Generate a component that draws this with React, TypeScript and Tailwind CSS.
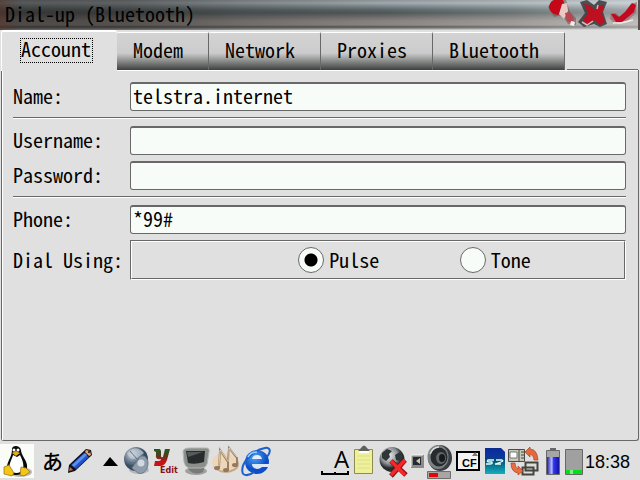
import { useState } from "react";
import type { ReactNode } from "react";

const MONO = "font-['Noto_Sans_Mono_CJK_JP','Liberation_Mono',monospace]";

const TABS = ["Account", "Modem", "Network", "Proxies", "Bluetooth"];

function TitleBar() {
  return (
    <header className="relative flex h-[30px] shrink-0 items-center justify-between pl-[5px]">
      <div className="absolute inset-0 bg-[linear-gradient(to_bottom,#8d969b_0px,#a6afb4_3px,#808b90_6px,#566163_10px,#4b5353_13px,#6d6d6b_17px,#8b8481_21px,#8e8884_25px,#4c4e4d_27px,#a3a5a5_29px,#d5d5d5_30px)]" />
      <div className="absolute inset-0 bg-[linear-gradient(to_right,rgba(70,44,36,0.8)_0%,rgba(38,36,34,0.62)_3%,rgba(40,38,36,0.55)_20%,rgba(60,60,60,0.35)_38%,rgba(110,110,110,0.1)_60%,rgba(230,235,235,0.2)_80%,rgba(255,255,255,0.45)_100%)]" />
      <h1 className="relative pb-[2px] text-[20px] leading-[28px] text-black">Dial-up (Bluetooth)</h1>
      <div className="relative flex">
        <button type="button" aria-label="Help" className="h-[30px] w-[32px]">
          <svg viewBox="546 0 32 30" className="h-[30px] w-[32px] blur-[0.6px]">
            <path d="M548 7L553 0H566L570 12L576 18V25L568 24L562 15L554 17Z" fill="#6e4a4c" opacity=".5" />
            <path d="M549 8Q549 2 554 0H563L566 8L558 15Q551 14 549 8Z" fill="#c40818" />
            <path d="M562 4L567 3L568 11L564 19L559 14Z" fill="#eac9c4" />
            <path d="M565 13L570 12L574 19L571 23L567 21Z" fill="#ba4450" />
            <path d="M571 21L575 22L574 26L570 25Z" fill="#f6eeee" />
          </svg>
        </button>
        <button type="button" aria-label="Cancel" className="h-[30px] w-[32px]">
          <svg viewBox="578 0 32 30" className="h-[30px] w-[32px] blur-[0.6px]">
            <path d="M580 2L587 0L594 5L599 0L607 2L603 12L607 24L600 27L594 24L584 27L578 22L585 13Z" fill="#363b3d" opacity=".85" />
            <path d="M584 4L589 5L595 10L599 5L604 5L602 14L605 22L600 25L594 20L588 24L583 20L588 13Z" fill="#bd1020" />
            <path d="M582 22L587 25L593 21M598 5L597 9" stroke="#dfb4b9" strokeWidth="1.500" fill="none" />
          </svg>
        </button>
        <button type="button" aria-label="OK" className="h-[30px] w-[30px]">
          <svg viewBox="610 0 30 30" className="h-[30px] w-[30px] blur-[0.6px]">
            <path d="M611 13L616 13L621 17L631 4L637 2L636 13L627 21L615 24L610 19Z" fill="#94686c" opacity=".7" />
            <path d="M611 14L615 14L619 17L625 12L632 3L636 5L634 12L622 22L616 22Z" fill="#c40820" />
            <path d="M613 23L621 23L633 20" stroke="#f3eaea" strokeWidth="1.500" fill="none" />
            <path d="M638 0H640V30H638Z" fill="#554d4b" />
          </svg>
        </button>
      </div>
    </header>
  );
}

function Tabs({ active, onSelect }: { active: string; onSelect: (tab: string) => void }) {
  return (
    <div role="tablist" className="flex h-[40px] shrink-0 items-end pl-px">
      {TABS.map((tab) =>
        tab === active ? (
          <button
            key={tab}
            type="button"
            role="tab"
            aria-selected
            onClick={() => onSelect(tab)}
            className="relative z-10 -mb-px h-[41px] rounded-t-[3px] border-t-2 border-l border-white bg-[#e0e0e0] pr-[24px] pb-[2px] pl-[18px]"
          >
            <span className="block h-[25px] w-fit border border-dotted border-black pr-px text-[20px] leading-[20px]">
              {tab}
            </span>
          </button>
        ) : (
          <button
            key={tab}
            type="button"
            role="tab"
            aria-selected={false}
            onClick={() => onSelect(tab)}
            className="h-[38px] rounded-t-[2px] border-t border-r border-t-white border-r-[#686868] bg-[linear-gradient(to_bottom,#d3d3d3_0px,#cccccc_20px,#a3a5a3_25px,#3e403f_37px)] pr-[25px] pb-[4px] pl-[16px] text-[20px] leading-[32px]"
          >
            {tab}
          </button>
        ),
      )}
      <span className="mr-[2px] ml-[2px] h-px flex-1 bg-[#686868]" />
    </div>
  );
}

function Field({ id, label, value = "", type = "text" }: { id: string; label: string; value?: string; type?: string }) {
  return (
    <div className="flex items-center">
      <label htmlFor={id} className="w-[117px] shrink-0 pb-[2px] leading-[27px]">
        {label}
      </label>
      <input
        id={id}
        type={type}
        defaultValue={value}
        autoComplete="off"
        className="h-[29px] min-w-0 flex-1 rounded-[3px] border border-t-2 border-[#686868] bg-[#f8fcf8] px-[2px] pb-[4px] leading-[22px] outline-none"
      />
    </div>
  );
}

function Rule() {
  return (
    <div className="pt-[6px] pb-[7px]">
      <hr className="h-[2px] border-0 border-t border-b border-t-[#686868] border-b-white" />
    </div>
  );
}

function Radio({ label, checked = false }: { label: string; checked?: boolean }) {
  return (
    <label className="flex items-center gap-[5px]">
      <input
        type="radio"
        name="dial"
        defaultChecked={checked}
        className="size-[26px] appearance-none rounded-full border border-[#686868] bg-[#f8fcf8] checked:bg-[radial-gradient(circle,#000_6px,#f8fcf8_7px)]"
      />
      {label}
    </label>
  );
}

function Icon({ x, label, className, children }: { x: number; label: string; className: string; children: ReactNode }) {
  return (
    <button type="button" aria-label={label} className={`h-[38px] shrink-0 overflow-hidden ${className}`}>
      <svg viewBox={`${x} 442 40 38`} className="h-[38px] w-[40px] max-w-none">
        {children}
      </svg>
    </button>
  );
}

function Taskbar() {
  return (
    <footer className="flex h-[38px] shrink-0 justify-between bg-[#e0e0e0]">
      <svg width="0" height="0" className="absolute">
        <defs>
          <radialGradient id="orb" cx=".35" cy=".3">
            <stop offset="0" stopColor="#e7eef3" />
            <stop offset=".5" stopColor="#8593a2" />
            <stop offset="1" stopColor="#394c61" />
          </radialGradient>
          <radialGradient id="world" cx=".4" cy=".35">
            <stop offset="0" stopColor="#e6eaeb" />
            <stop offset=".65" stopColor="#8f9598" />
            <stop offset="1" stopColor="#25292b" />
          </radialGradient>
          <radialGradient id="blue" cx=".4" cy=".3">
            <stop offset="0" stopColor="#4fa6f7" />
            <stop offset="1" stopColor="#0f4fc6" />
          </radialGradient>
          <linearGradient id="ygrad" x2="0" y2="1">
            <stop offset="0" stopColor="#176024" />
            <stop offset=".45" stopColor="#663219" />
            <stop offset=".75" stopColor="#c8121b" />
          </linearGradient>
          <linearGradient id="sdgrad" x2="0" y2="1">
            <stop offset="0" stopColor="#0c2a96" />
            <stop offset=".38" stopColor="#0b37a0" />
            <stop offset=".42" stopColor="#064468" />
            <stop offset="1" stopColor="#10b2c0" />
          </linearGradient>
          <linearGradient id="cell">
            <stop offset="0" stopColor="#2020a6" />
            <stop offset=".4" stopColor="#b8bcff" />
            <stop offset=".55" stopColor="#3038ed" />
            <stop offset="1" stopColor="#1414a0" />
          </linearGradient>
        </defs>
      </svg>
      <div className="flex">
        <Icon x={0} label="Launcher" className="w-[40px]">
          <path d="M0 444H34V478H0Z" fill="#fafcf8" />
          <ellipse cx="20" cy="472" rx="12" ry="5" fill="#b9b9b7" />
          <path d="M12 449C12 445 20 445 21 450C21 455 26 459 27 465C28 471 23 475 16 475C9 475 6 471 7 466C8 460 12 457 12 449Z" fill="#080808" />
          <path d="M13 455L17 457L20 455C23 461 24 465 23 469C21 474 13 474 10 470C8 464 12 460 13 455Z" fill="#fff" />
          <circle cx="14" cy="450" r="1.500" fill="#fff" />
          <circle cx="18" cy="450" r="1.500" fill="#fff" />
          <path d="M12 453L16 451L20 453L16 456Z" fill="#e4ad18" />
          <path d="M4 467L9 465L14 473L12 476L4 474ZM21 467L26 468L30 472L24 476L20 475Z" fill="#f2c516" stroke="#946d0a" strokeWidth=".7" />
        </Icon>
        <button
          type="button"
          aria-label="Input method"
          className="w-[25px] pb-[2px] font-['Noto_Sans_CJK_JP',sans-serif] text-[21px] leading-[36px] font-medium"
        >
          あ
        </button>
        <Icon x={65} label="Pen" className="w-[33px]">
          <path d="M68 473L69 465L86 449L91 450L92 455L75 471Z" fill="#101018" />
          <path d="M71 465L84 453L89 457L76 469Z" fill="#2450c8" />
          <path d="M72 465L85 453L87 455L74 467Z" fill="#5b90ea" />
          <path d="M86 450L90 451L91 455L89 456L85 452Z" fill="#e3a36f" />
          <path d="M69 471L70 467L73 470Z" fill="#bd7045" />
          <circle cx="89" cy="452" r="1" fill="#111" />
        </Icon>
        <Icon x={98} label="Show more" className="w-[24px]">
          <path d="M103 466L110 457L118 466Z" fill="#000" />
        </Icon>
        <Icon x={122} label="Media" className="w-[29px]">
          <ellipse cx="139" cy="470" rx="10" ry="4" fill="#b4b6b8" />
          <circle cx="136" cy="459" r="12" fill="url(#orb)" />
          <path d="M127 453Q136 444 144 453L137 458Q130 461 127 453Z" fill="#c1ccd5" opacity=".7" />
          <path d="M130 451L137 459M127 462L136 464" stroke="#5b7085" strokeWidth="1" />
          <path d="M138 460C140 453 148 456 148 463C148 471 142 475 138 473L132 468Z" fill="#8f9cac" stroke="#6e7f90" />
          <circle cx="141" cy="463" r="3.500" fill="#d1d9df" />
        </Icon>
        <Icon x={151} label="Editor" className="w-[30px]">
          <path
            d="M154 449H160L161 451V456Q161 458 163 457L165 449H170L167 460Q165 466 160 466H154L155 461H159Q161 461 161 459Q155 460 156 455V452L154 451Z"
            fill="url(#ygrad)"
          />
          <text x="160" y="473" fontSize="8" fontWeight="900" fontFamily="DejaVu Sans, sans-serif" fill="#861218">
            Edit
          </text>
        </Icon>
        <Icon x={181} label="Terminal" className="w-[30px]">
          <ellipse cx="196" cy="471" rx="11" ry="4" fill="#a0a09e" />
          <path d="M187 465H205L203 472Q195 476 189 470Z" fill="#777a77" />
          <path d="M183 451Q184 448 190 448H206Q210 448 209 452L207 464Q206 468 201 468H189Q185 467 184 462Z" fill="#8b8f8c" stroke="#b2b5b0" />
          <path d="M186 451H205L204 462Q195 465 188 463Z" fill="#282c2c" />
          <path d="M187 452H203L188 457Z" fill="#555b5a" />
        </Icon>
        <Icon x={211} label="Music" className="w-[30px]">
          <ellipse cx="226" cy="464" rx="13" ry="9" fill="#c6a986" />
          <ellipse cx="225" cy="462" rx="13" ry="9" fill="#eed6b8" />
          <path d="M219 468L220 450L228 462V470M228 462L229 448L237 458V464" stroke="#9a8064" strokeWidth="2" fill="none" />
          <path d="M219 466L220 450L228 461M229 462V448L237 457" stroke="#f8e8cf" strokeWidth=".7" fill="none" />
          <ellipse cx="217" cy="468" rx="3" ry="2" fill="#94785e" />
          <ellipse cx="226" cy="470" rx="3" ry="2" fill="#94785e" />
          <ellipse cx="235" cy="465" rx="3" ry="2" fill="#94785e" />
        </Icon>
        <Icon x={241} label="Internet" className="w-[31px]">
          <circle cx="257" cy="462" r="12" fill="url(#blue)" />
          <path d="M252 459Q253 455 257 455Q261 455 262 459Z" fill="#e4eefb" />
          <path d="M252 464H270V467H262Q260 469 257 469Q252 468 252 464Z" fill="#dce8f6" />
          <path d="M243 474C239 464 253 450 265 448C271 447 271 452 267 457M243 474Q248 477 254 472" fill="none" stroke="#1b61cd" strokeWidth="2" />
          <path d="M248 457Q251 452 257 452" stroke="#9bd0ff" strokeWidth="1.500" fill="none" />
        </Icon>
      </div>
      <div className="flex">
        <Icon x={318} label="Input mode" className="w-[34px]">
          <text x="334" y="468" fontSize="24" fontFamily="Open Sans, sans-serif">
            A
          </text>
          <path d="M322 471V474H348V471M335 472V474" fill="none" stroke="#000" strokeWidth="2" />
        </Icon>
        <Icon x={352} label="Clipboard" className="w-[24px]">
          <path d="M354.500 449.500H372.500V473.500H354.500Z" fill="#eef09a" stroke="#8c8c4f" />
          <path d="M357 456H370M357 460H370M357 464H370M357 468H370" stroke="#dce088" />
          <path d="M358 451L361 448Q364 443 367 448L370 451Z" fill="#5e6159" />
          <path d="M359 452H369" stroke="#fff" strokeWidth="2" />
        </Icon>
        <Icon x={376} label="Network status" className="w-[33px]">
          <circle cx="392" cy="459.500" r="12.500" fill="url(#world)" />
          <path d="M382 453L387 449L392 451L389 454L390 457L386 461L382 458ZM395 455L400 452L403 457L400 461L396 460Z" fill="#303638" />
          <path d="M391 461L406 475M405 460L391 476" stroke="#8b1014" strokeWidth="5" />
          <path d="M391 461L405 475M405 460L391 475" stroke="#f3282b" strokeWidth="3.500" />
        </Icon>
        <Icon x={409} label="Display" className="w-[16px]">
          <path d="M411 455H424V468H411Z" fill="#8c8c86" />
          <path d="M411 467V455H423" fill="none" stroke="#f8f8f4" />
          <path d="M413 457H421V465H413Z" fill="#26283b" />
          <path d="M420 458L416 461L420 464Z" fill="#d6cc99" />
        </Icon>
        <Icon x={425} label="Volume" className="w-[29px]">
          <ellipse cx="440" cy="458" rx="12" ry="13" fill="#3a3e40" />
          <ellipse cx="438" cy="457" rx="10.500" ry="12" fill="#7c8284" />
          <ellipse cx="439" cy="457" rx="8.500" ry="9.500" fill="#272b2d" />
          <ellipse cx="441" cy="458" rx="5" ry="6" fill="#606668" />
          <ellipse cx="442" cy="458" rx="3" ry="4" fill="#171a1b" />
          <path d="M430 454Q433 447 439 447" fill="none" stroke="#d8dddd" strokeWidth="1.500" />
          <path d="M427.500 471.500H450.500V478.500H427.500Z" fill="#a9a5a5" stroke="#706d6d" />
          <path d="M429 473H438V477H429Z" fill="#e70606" />
        </Icon>
        <Icon x={454} label="CF card" className="w-[29px]">
          <path d="M457 452H479V470H457Z" fill="#f3f3f3" stroke="#000" strokeWidth="2" />
          <path d="M472 456L475 452L478 456Z" fill="#777" />
          <text x="462" y="467" fontSize="11" fontWeight="700" fontFamily="Liberation Sans, sans-serif">
            CF
          </text>
        </Icon>
        <Icon x={483} label="SD card" className="w-[24px]">
          <path d="M485 448H501L505 452V474H485Z" fill="url(#sdgrad)" />
          <path d="M494 460H488Q486 462 490 462H492Q493 464 490 464H486M496 460H502Q504 461 501 462L495 464H501" fill="none" stroke="#dffeff" strokeWidth="1.300" />
        </Icon>
        <Icon x={507} label="Sync" className="w-[35px]">
          <path d="M508.500 449.500H524.500V461.500H508.500Z" fill="#c7c7ba" stroke="#4b4b44" />
          <path d="M510 452H517V458H510Z" fill="#fff" stroke="#777" />
          <path d="M519 450V461M521 452H524M521 455H524M521 458H524" stroke="#44443e" />
          <path d="M525.500 462.500H537.500V470.500H525.500ZM522.500 467.500H533.500V474.500H522.500Z" fill="#deded8" stroke="#45453f" strokeWidth="2" />
          <path d="M525 452L530 447V449Q537 449 538 460H534Q534 455 530 454V457Z" fill="#e5673c" stroke="#a54129" strokeWidth=".7" />
          <path d="M511 463H515Q515 468 518 469V466L523 471L518 475V473Q511 472 511 463Z" fill="#e96e40" stroke="#a54129" strokeWidth=".7" />
        </Icon>
        <Icon x={542} label="Battery" className="w-[21px]">
          <path d="M550 448H556V450H550Z" fill="#686868" />
          <path d="M546.500 450.500H559.500V474.500H546.500Z" fill="#a6a6a6" stroke="#686868" />
          <path d="M547 457H559V474H547Z" fill="url(#cell)" />
        </Icon>
        <Icon x={563} label="Memory" className="w-[22px]">
          <path d="M565.500 449.500H582.500V474.500H565.500Z" fill="#a0a0a0" stroke="#686868" />
          <path d="M566 470H582V474H566Z" fill="#00df18" />
          <path d="M570 470H573V474H570Z" fill="#78f47d" />
        </Icon>
        <time className="w-[55px] font-['Liberation_Sans',sans-serif] text-[18px] leading-[40px]">18:38</time>
      </div>
    </footer>
  );
}

export default function App() {
  const [tab, setTab] = useState("Account");
  return (
    <div className={`flex h-screen flex-col overflow-hidden bg-[#e0e0e0] text-[20px] text-black ${MONO}`}>
      <TitleBar />
      <Tabs active={tab} onSelect={setTab} />
      <main className="mx-px mb-px flex flex-1 flex-col rounded-b-[3px] border border-t-0 border-[#686868]">
        <form className="flex flex-1 flex-col border-t border-l border-white pt-[11px] pr-[12px] pl-[10px]">
          <Field id="name" label="Name:" value="telstra.internet" />
          <Rule />
          <div className="flex flex-col gap-[6px]">
            <Field id="username" label="Username:" />
            <Field id="password" label="Password:" type="password" />
          </div>
          <Rule />
          <div className="flex flex-col gap-[6px]">
            <Field id="phone" label="Phone:" value="*99#" />
            <div role="radiogroup" aria-labelledby="dial-label" className="flex items-center">
              <span id="dial-label" className="w-[117px] shrink-0 pb-[2px] leading-[27px]">
                Dial Using:
              </span>
              <div className="flex-1 border border-[#686868] border-r-white border-b-white">
                <div className="grid h-[38px] grid-cols-3 items-center border border-white border-r-[#686868] border-b-[#686868] pr-[3px] pl-[5px]">
                  <span />
                  <Radio label="Pulse" checked />
                  <Radio label="Tone" />
                </div>
              </div>
            </div>
          </div>
        </form>
      </main>
      <Taskbar />
    </div>
  );
}
